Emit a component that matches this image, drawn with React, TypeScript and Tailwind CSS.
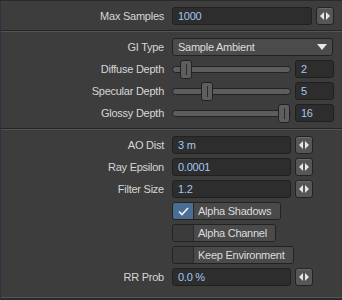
import React from "react";

const font = { fontFamily: '"Liberation Sans", Arial, sans-serif' };

const Arrows = () => (
  <button className="w-[18px] h-[18px] flex items-center justify-center rounded-[3px] border border-[#232323] bg-[#565656] shadow-[inset_0_1px_0_#6a6a6a]">
    <svg width="10" height="8" viewBox="0 0 10 8">
      <polygon points="4,0 4,8 0,4" fill="#e6e6e6" />
      <polygon points="6,0 6,8 10,4" fill="#e6e6e6" />
    </svg>
  </button>
);

const Field = ({ value, w }: { value: string; w: string }) => (
  <div
    className={`${w} h-[18px] flex items-center pl-[5px] rounded-[3px] border border-[#202020] bg-[#2d2d2d] text-[#a4c6f2]`}
  >
    {value}
  </div>
);

const Label = ({ text }: { text: string }) => (
  <div className="w-[163px] text-right text-[#d6d6d6]">{text}</div>
);

const Slider = ({ pos, value }: { pos: number; value: string }) => (
  <div className="flex items-center gap-[4px]">
    <div className="relative w-[119px] h-[19px] flex items-center">
      <div className="w-full h-[7px] rounded-full border border-[#222] bg-[#5d5d5d]" />
      <div
        className="absolute top-0 w-[12px] h-[19px] rounded-[3px] border border-[#222] bg-[#5e5e5e] flex items-center justify-center"
        style={{ left: pos }}
      >
        <div className="w-[1px] h-[11px] bg-[#2a2a2a]" />
      </div>
    </div>
    <Field value={value} w="w-[39px]" />
  </div>
);

const Toggle = ({ text, checked, w }: { text: string; checked?: boolean; w: string }) => (
  <div className={`${w} h-[18px] flex rounded-[3px] border border-[#222] overflow-hidden`}>
    <div
      className={`w-[21px] flex items-center justify-center border-r border-[#2a2a2a] ${
        checked ? "bg-[#4a6d94]" : "bg-[#3b3b3b]"
      }`}
    >
      {checked && (
        <svg width="11" height="9" viewBox="0 0 11 9">
          <polyline points="1,4.5 4,7.5 10,1" fill="none" stroke="#eef3fa" strokeWidth="1.6" />
        </svg>
      )}
    </div>
    <div className="flex-1 flex items-center pl-[4px] bg-[#4a4a4a] text-[#dcdcdc]">{text}</div>
  </div>
);

const Row = ({ label, children }: { label?: string; children: React.ReactNode }) => (
  <div className="flex items-center gap-[8px] h-[18px]">
    {label ? <Label text={label} /> : <div className="w-[163px]" />}
    {children}
  </div>
);

const Sep = () => <div className="h-[2px] border-t border-[#252525] border-b-[#555] border-b" />;

export default function App() {
  return (
    <div
      className="w-[342px] h-[300px] bg-[#3d3d3d] text-[11px] tracking-[-0.25px] border-l border-[#2b3440] border-t border-t-[#2a2a2a] flex flex-col"
      style={font}
    >
      <div className="pt-[6px] pb-[5px]">
        <Row label="Max Samples">
          <div className="flex gap-[4px]">
            <Field value="1000" w="w-[140px]" />
            <Arrows />
          </div>
        </Row>
      </div>
      <Sep />
      <div className="pt-[6px] pb-[6px] flex flex-col gap-[4px]">
        <Row label="GI Type">
          <div className="w-[161px] h-[18px] flex items-center justify-between px-[5px] rounded-[3px] border border-[#222] bg-[#4b4b4b] text-[#dcdcdc]">
            <span>Sample Ambient</span>
            <svg width="10" height="6" viewBox="0 0 10 6">
              <polygon points="0,0 10,0 5,6" fill="#e8e8e8" />
            </svg>
          </div>
        </Row>
        <Row label="Diffuse Depth">
          <Slider pos={8} value="2" />
        </Row>
        <Row label="Specular Depth">
          <Slider pos={29} value="5" />
        </Row>
        <Row label="Glossy Depth">
          <Slider pos={106} value="16" />
        </Row>
      </div>
      <Sep />
      <div className="pt-[6px] flex flex-col gap-[4px]">
        <Row label="AO Dist">
          <div className="flex gap-[4px]">
            <Field value="3 m" w="w-[119px]" />
            <Arrows />
          </div>
        </Row>
        <Row label="Ray Epsilon">
          <div className="flex gap-[4px]">
            <Field value="0.0001" w="w-[119px]" />
            <Arrows />
          </div>
        </Row>
        <Row label="Filter Size">
          <div className="flex gap-[4px]">
            <Field value="1.2" w="w-[119px]" />
            <Arrows />
          </div>
        </Row>
        <Row>
          <Toggle text="Alpha Shadows" checked w="w-[109px]" />
        </Row>
        <Row>
          <Toggle text="Alpha Channel" w="w-[104px]" />
        </Row>
        <Row>
          <Toggle text="Keep Environment" w="w-[122px]" />
        </Row>
        <Row label="RR Prob">
          <div className="flex gap-[4px]">
            <Field value="0.0 %" w="w-[119px]" />
            <Arrows />
          </div>
        </Row>
      </div>
      <div className="mt-auto h-[3px] border-t border-[#555] bg-[#2a2a2a]" />
    </div>
  );
}
